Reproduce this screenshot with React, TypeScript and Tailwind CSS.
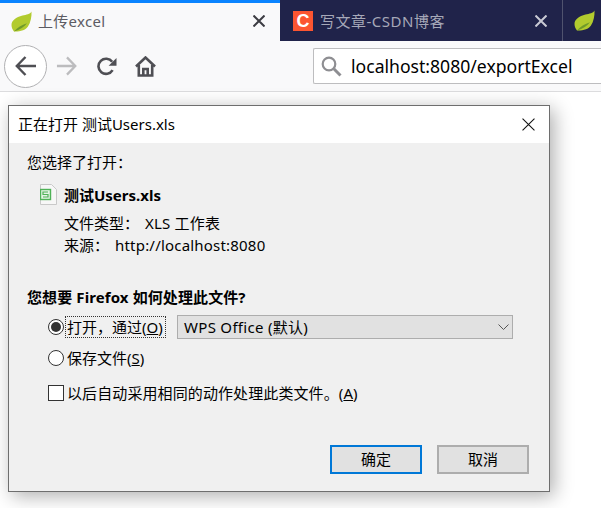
const font = "font-['Noto_Sans','Noto_Sans_CJK_SC',sans-serif]";

function Leaf({ className }: { className?: string }) {
  return (
    <svg viewBox="0 0 21 21" className={className}>
      <path d="M20.5 0.5 C19 3.5 15.5 3.5 11.5 4.5 C5 6 0.5 9.5 0.5 14 C0.5 16.5 1.5 18.5 3 20.5 C7 20.5 13.5 20.5 16.8 15.8 C19.6 11.8 20.8 5.5 20.5 0.5 Z" fill="#b2cb2e" />
      <path d="M3 20.5 C6.5 16.5 10.5 14 16 12.2 C13.5 15.5 9 18.8 3 20.5 Z" fill="#6f9a2a" />
    </svg>
  );
}

function CloseX({ color, size = 12, width = 2 }: { color: string; size?: number; width?: number }) {
  return (
    <svg width={size} height={size} viewBox="0 0 12 12" fill="none" stroke={color} strokeWidth={width}>
      <path d="M0.5 0.5 L11.5 11.5 M11.5 0.5 L0.5 11.5" />
    </svg>
  );
}

function Browser() {
  return (
    <>
      <div className="flex h-[41px] bg-[#20234a]">
        <div className="flex w-[280px] items-center border-t-[3px] border-[#0a84ff] bg-[#f9f9fa] pb-[2px] pl-[11px] pr-[15px]">
          <Leaf className="h-[21px] w-[21px]" />
          <span className="ml-[6px] flex-1 text-[15px] tracking-[0.3px] text-[#5c5c63]">上传excel</span>
          <CloseX color="#3c3c42" />
        </div>
        <div className="flex w-[283px] items-center border-r border-[#50536e] pl-[13px] pr-[15px] pt-[1px]">
          <span className="flex h-[20px] w-[20px] items-center justify-center bg-[#fc5531] font-['Liberation_Sans',sans-serif] text-[18px] font-bold leading-none text-white">C</span>
          <span className="ml-[7px] flex-1 text-[15px] tracking-[0.5px] text-[#a6a8b8]">写文章-CSDN博客</span>
          <CloseX color="#c9cad4" />
        </div>
        <div className="flex flex-1 items-center pl-[11px]">
          <Leaf className="h-[21px] w-[21px] shrink-0" />
        </div>
      </div>
      <div className="flex h-[51px] items-center border-b border-[#dcdcde] bg-[#f9f9fa] pl-[4px]">
        <div className="flex h-[43px] w-[43px] items-center justify-center rounded-full border border-[#b1b1b3] bg-white">
          <svg width="22" height="20" viewBox="0 0 22 20" fill="none" stroke="#4f4f54" strokeWidth="2.4">
            <path d="M21 10 H2 M10.5 1 L1.8 10 L10.5 19" />
          </svg>
        </div>
        <svg width="21" height="20" viewBox="0 0 22 20" fill="none" stroke="#bcbcbe" strokeWidth="2.4" className="ml-[9px]">
          <path d="M1 10 H20 M11.5 1 L20.2 10 L11.5 19" />
        </svg>
        <svg width="20" height="19" viewBox="0 0 20 19" fill="none" stroke="#4f4f54" className="ml-[20px]">
          <path d="M15.6 13.2 A7.6 7.6 0 1 1 15.2 4.8" strokeWidth="2.6" />
          <path d="M19.5 1 V8.8 H11.6 Z" fill="#4f4f54" stroke="none" />
        </svg>
        <svg width="21" height="21" viewBox="0 0 21 21" className="ml-[18px]" fill="none" stroke="#4f4f54" strokeWidth="2.6">
          <path d="M1 10.5 L10.5 1.5 L20 10.5" />
          <path d="M3.8 9 V19.5 H17.2 V9" />
          <path d="M8.3 19.5 V13 H12.7 V19.5" />
        </svg>
        <div className="ml-[157px] flex h-[36px] flex-1 items-center rounded-l-[2px] border border-r-0 border-[#bdbdbf] bg-white pl-[7px]">
          <svg width="21" height="21" viewBox="0 0 21 21" fill="none" stroke="#8e8e92">
            <circle cx="8" cy="8" r="6.3" strokeWidth="2.2" />
            <path d="M12.8 12.8 L19.5 19.5" strokeWidth="3" />
          </svg>
          <span className="ml-[9px] whitespace-nowrap text-[17.6px] text-black">localhost:8080/exportExcel</span>
        </div>
      </div>
    </>
  );
}

function Radio({ checked }: { checked?: boolean }) {
  return (
    <span className="flex h-[16px] w-[16px] shrink-0 items-center justify-center rounded-full border border-[#333] bg-white">
      {checked && <span className="h-[10px] w-[10px] rounded-full bg-[#333]" />}
    </span>
  );
}

function Dialog() {
  return (
    <div className="ml-2 mt-[13px] h-[387px] w-[542px] border border-[#6e6e6e] bg-[#f0f0f0] text-[15px] leading-[20px] text-black [text-spacing-trim:space-all] shadow-[4px_4px_18px_rgba(0,0,0,0.32)]">
      <div className="flex h-[37px] items-center justify-between bg-white pl-[9px] pr-[14px]">
        <span className="pb-[2px]">正在打开 测试Users.xls</span>
        <CloseX color="#111" size={13} width={1} />
      </div>
      <div className="pl-[18px] pr-[36px]">
        <p className="mt-[9px]">您选择了打开{"\uFF1A"}</p>
        <div className="mt-[12px] flex items-center pl-[13px]">
          <svg width="17" height="21" viewBox="0 0 17 21" fill="none">
            <path d="M0.5 0.5 H11.5 L16.5 5.5 V20.5 H0.5 Z" fill="#f7f7f7" stroke="#c9c9c9" />
            <rect x="0.5" y="5.5" width="10" height="10" fill="#e4f3e4" stroke="#4fb257" strokeWidth="1.4" />
            <path d="M8 8 H3 V10.5 H8 V13 H3" stroke="#4fb257" strokeWidth="1.2" />
          </svg>
          <span className="ml-[7px] font-bold">测试Users.xls</span>
        </div>
        <div className="mt-[8px] flex pl-[37px]">
          <span className="w-[81px]">文件类型{"\uFF1A"}</span>
          <span className="tracking-[0.2px]">XLS 工作表</span>
        </div>
        <div className="mt-[2px] flex pl-[37px]">
          <span className="w-[51px]">来源{"\uFF1A"}</span>
          <span className="tracking-[0.2px]">http://localhost:8080</span>
        </div>
        <p className="mt-[32px] font-bold tracking-[0.1px]">您想要 Firefox 如何处理此文件?</p>
        <div className="mt-[8px] flex items-center pl-[21px]">
          <Radio checked />
          <span className="ml-[1px] flex h-[22px] w-[101px] items-center whitespace-nowrap border border-dotted border-[#333] pl-[1px]">
            打开{"\uFF0C"}通过(<u>O</u>)
          </span>
          <div className="ml-[11px] flex h-[24px] flex-1 items-center justify-between border border-[#adadad] bg-[#e1e1e1] pl-[6px] pr-[3px]">
            <span className="tracking-[0.3px]">WPS Office (默认)</span>
            <svg width="11" height="6" viewBox="0 0 11 6" fill="none" stroke="#555">
              <path d="M0.5 0.5 L5.5 5.5 L10.5 0.5" />
            </svg>
          </div>
        </div>
        <div className="mt-[9px] flex items-center pl-[21px]">
          <Radio />
          <span className="ml-[3px]">保存文件(<u>S</u>)</span>
        </div>
        <div className="mt-[15px] flex items-center pl-[21px]">
          <span className="h-[16px] w-[16px] shrink-0 border border-[#333] bg-white" />
          <span className="ml-[3px] tracking-[0.1px]">以后自动采用相同的动作处理此类文件。(<u>A</u>)</span>
        </div>
        <div className="mt-[42px] flex justify-end gap-[15px]">
          <button className="h-[29px] w-[92px] border-2 border-[#0078d7] bg-[#e1e1e1] pb-[2px]">确定</button>
          <button className="mr-[-16px] h-[29px] w-[92px] border-2 border-[#adadad] bg-[#e1e1e1] pb-[2px]">取消</button>
        </div>
      </div>
    </div>
  );
}

export default function App() {
  return (
    <div className={`${font} h-[508px] w-[601px] overflow-hidden bg-white`}>
      <Browser />
      <Dialog />
    </div>
  );
}
